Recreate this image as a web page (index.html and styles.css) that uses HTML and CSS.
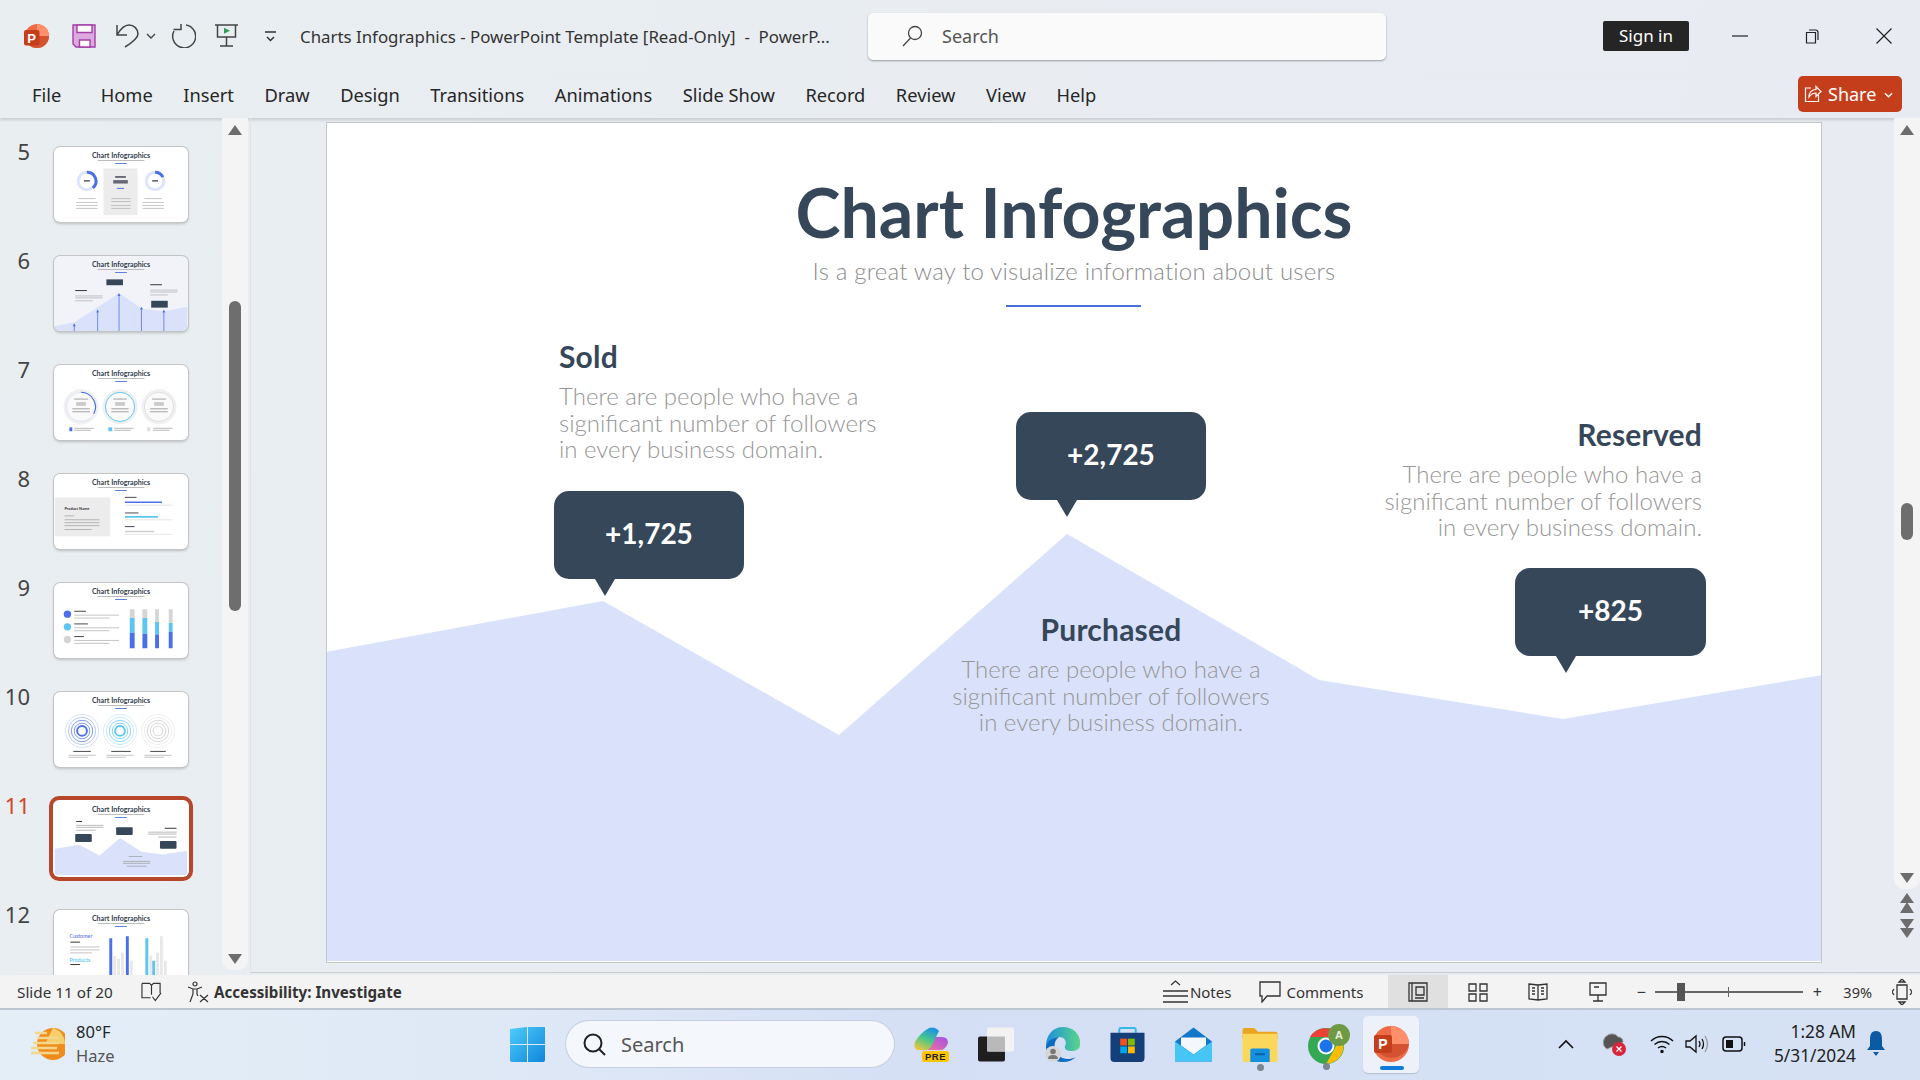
FILE: index.html
```html
<!DOCTYPE html>
<html lang="en">

<head>
    <meta charset="UTF-8">
    <title>Charts Infographics - PowerPoint</title>
    <link rel="stylesheet" href="styles.css">
</head>

<body>
    <header class="titlebar">
        <svg class="qat logo" viewBox="0 0 25 24">
            <circle cx="13" cy="12" r="12" fill="#ed6c47"/>
            <path d="M13 0a12 12 0 0 1 12 12H13z" fill="#ff8f6b"/>
            <path d="M1 12a12 12 0 0 0 24 0z" fill="#d35230"/>
            <rect x="0" y="6" width="15.500" height="15.500" rx="2" fill="#c43e1c"/>
            <text x="7.700" y="18.500" class="logo-p">P</text>
        </svg>
        <svg class="qat save" viewBox="0 0 24 24" fill="none" stroke="#a43fa8" stroke-width="1.400">
            <path d="M1 1h22v22H4l-3-3z" fill="#dcaade"/>
            <path d="M5 1h15v7.500H5zM7.500 16h10.500v7H7.500z" fill="#fff"/>
        </svg>
        <svg class="qat undo" viewBox="0 0 25 24" fill="none" stroke="#444" stroke-width="1.500">
            <path d="M2 1V11H12M2 11C6 4 10 1 14 1 19 1 23 5 23 10 23 14 18 18 10 23"/>
        </svg>
        <svg class="qat chev" viewBox="0 0 10 6" fill="none" stroke="#444" stroke-width="1.400">
            <path d="M1 1l4 4 4-4"/>
        </svg>
        <svg class="qat redo" viewBox="0 0 25 24" fill="none" stroke="#444" stroke-width="1.500">
            <path d="M15 1A11.500 11.500 0 1 1 3 7M10 0V5.500H2.500"/>
        </svg>
        <svg class="qat present" viewBox="0 0 23 24" fill="none" stroke="#444" stroke-width="1.500">
            <path d="M0 1h23M2.500 1v12h18V1M11.500 13v9M5 22h13"/>
            <path d="M9 3.700l6 3-6 3z" fill="#2e9e5b" stroke="none"/>
        </svg>
        <svg class="qat custom" viewBox="0 0 13 14" fill="none" stroke="#333" stroke-width="1.500">
            <path d="M1 3h11M3 8l3.500 3.500L10 8"/>
        </svg>
        <div class="doc-title">Charts Infographics - PowerPoint Template [Read-Only]&nbsp; -&nbsp; PowerP...</div>
        <div class="search-box">
            <svg class="search-glass" viewBox="0 0 22 22" fill="none" stroke="#444" stroke-width="1.300">
                <circle cx="14" cy="8" r="6.500"/>
                <path d="M9.500 13L2 21"/>
            </svg>
            <span>Search</span>
        </div>
        <div class="sign-in">Sign in</div>
        <div class="win-buttons">
            <svg viewBox="0 0 16 16" fill="none" stroke="#222" stroke-width="1.200"><path d="M0 8h16"/></svg>
            <svg viewBox="0 0 16 16" fill="none" stroke="#222" stroke-width="1.200"><path d="M2.500 4.500h9v10.500h-9zM5 2h6.500q2.500 0 2.500 2.500V12"/></svg>
            <svg viewBox="0 0 16 16" fill="none" stroke="#222" stroke-width="1.200"><path d="M0.500 0.500l15 15M15.500 0.500l-15 15"/></svg>
        </div>
    </header>

    <nav class="ribbon">
        <div class="tabs">
            <a class="tab-file">File</a>
            <a>Home</a>
            <a>Insert</a>
            <a>Draw</a>
            <a>Design</a>
            <a>Transitions</a>
            <a>Animations</a>
            <a>Slide Show</a>
            <a>Record</a>
            <a>Review</a>
            <a>View</a>
            <a>Help</a>
        </div>
        <div class="share">
            <svg viewBox="0 0 18 18" fill="none" stroke="#fff" stroke-width="1.200">
                <path d="M7 3H1.500v13.500h13V10M5 12c0-5 3-7.500 7-7.500V1.500l5 5-5 5V8c-3 0-5 1-7 4z"/>
            </svg>
            <span>Share</span>
            <svg class="share-chev" viewBox="0 0 10 6" fill="none" stroke="#fff" stroke-width="1.500"><path d="M1 1l4 4 4-4"/></svg>
        </div>
    </nav>

    <main class="workspace">
        <aside class="panel">
            <svg width="0" height="0" class="defs">
                <defs>
                    <g id="thumbHead">
                        <text x="68" y="11" class="th-title">Chart Infographics</text>
                        <rect x="44" y="13.500" width="48" height="0.800" fill="#aaa"/>
                        <rect x="62" y="16.500" width="12" height="0.900" fill="#4a6fe0"/>
                    </g>
                </defs>
            </svg>
            <div class="thumbs">
                <div class="thumb-row">
                    <span class="num">5</span>
                    <svg class="thumb" viewBox="0 0 136 77">
                        <use href="#thumbHead"/>
                        <rect x="50" y="22" width="35" height="48" fill="#ececec"/>
                        <circle cx="33" cy="35" r="9" fill="none" stroke="#dde4fb" stroke-width="3"/>
                        <path d="M33 26a9 9 0 0 1 6 16" fill="none" stroke="#4a6fe8" stroke-width="3"/>
                        <circle cx="103" cy="35" r="9" fill="none" stroke="#dde4fb" stroke-width="3"/>
                        <path d="M103 26a9 9 0 0 1 8 5" fill="none" stroke="#4a6fe8" stroke-width="3"/>
                        <rect x="30" y="34" width="6" height="1.500" fill="#556"/>
                        <rect x="100" y="34" width="6" height="1.500" fill="#556"/>
                        <rect x="62" y="30" width="11" height="1.500" fill="#445"/>
                        <rect x="60" y="34" width="15" height="3.500" fill="#667"/>
                        <rect x="64" y="42" width="7" height="1" fill="#4a6fe8"/>
                        <path d="M24 53h18M22 57h22M22 60h22M22 63h22M92 53h18M90 57h22M90 60h22M90 63h22M58 53h20M58 56h20M58 60h20M58 63h20" stroke="#aaa" stroke-width="0.700"/>
                    </svg>
                </div>
                <div class="thumb-row">
                    <span class="num">6</span>
                    <svg class="thumb thumb-tint" viewBox="0 0 136 77">
                        <use href="#thumbHead"/>
                        <path d="M0 72L20 68 44 53 66 38 89 54 112 57 136 52V77H0z" fill="#d9e1fb"/>
                        <path d="M20 77V71M44 77V58M66 77V41M89 77V55M112 77V58" stroke="#6d89ee" stroke-width="1"/>
                        <path d="M20 69l-1.500 3h3zM44 55l-1.500 3h3zM66 38l-1.500 3h3zM89 52l-1.500 3h3zM112 55l-1.500 3h3z" fill="#4a6fe8"/>
                        <rect x="53" y="24" width="17" height="6" fill="#364759"/>
                        <rect x="99" y="46" width="17" height="7" fill="#364759"/>
                        <rect x="21" y="35" width="12" height="1" fill="#333"/>
                        <rect x="98" y="29" width="12" height="1" fill="#333"/>
                        <path d="M21 41h28M21 43h28M21 46h18M98 35h28M98 37h28M98 40h18" stroke="#aaa" stroke-width="0.700"/>
                    </svg>
                </div>
                <div class="thumb-row">
                    <span class="num">7</span>
                    <svg class="thumb" viewBox="0 0 136 77">
                        <use href="#thumbHead"/>
                        <circle cx="27" cy="43" r="18" fill="#f0f0f0"/>
                        <circle cx="67" cy="43" r="18" fill="#f0f0f0"/>
                        <circle cx="107" cy="43" r="18" fill="#f0f0f0"/>
                        <circle cx="27" cy="43" r="15" fill="#fafafa" stroke="#dde4fb"/>
                        <circle cx="67" cy="43" r="15" fill="#fafafa" stroke="#5cc6f0"/>
                        <circle cx="107" cy="43" r="15" fill="#fafafa" stroke="#ddd"/>
                        <path d="M27 28a15 15 0 0 1 13 22" fill="none" stroke="#4a6fe8" stroke-width="1.200"/>
                        <path d="M20 35h14M22 39h10M22 41h10M18 45h18M18 48h18M60 35h14M62 39h10M62 41h10M58 45h18M58 48h18M100 35h14M102 39h10M102 41h10M98 45h18M98 48h18" stroke="#777" stroke-width="0.700"/>
                        <rect x="15" y="64" width="3" height="4" fill="#4a6fe8"/>
                        <rect x="55" y="64" width="4" height="4" fill="#5cc6f0"/>
                        <rect x="95" y="64" width="3" height="4" fill="#ddd"/>
                        <path d="M20 65h20M20 67h17M61 65h20M61 67h17M101 65h20M101 67h17" stroke="#999" stroke-width="0.700"/>
                    </svg>
                </div>
                <div class="thumb-row">
                    <span class="num">8</span>
                    <svg class="thumb" viewBox="0 0 136 77">
                        <use href="#thumbHead"/>
                        <rect x="0" y="24" width="57" height="40" fill="#ececec"/>
                        <text x="10" y="37" class="th-small">Product Name</text>
                        <path d="M10 43h10M10 47h36M10 50h36M10 53h36M10 57h28" stroke="#999" stroke-width="0.700"/>
                        <path d="M72 24h12M72 40h14M72 54h10" stroke="#445" stroke-width="1"/>
                        <path d="M72 29h38" stroke="#4a6fe8" stroke-width="1.600"/>
                        <path d="M72 44h34" stroke="#5cc6f0" stroke-width="1.600"/>
                        <path d="M72 59h30" stroke="#ccc" stroke-width="1.600"/>
                        <path d="M72 32h48M72 47h48M72 62h48" stroke="#ccc" stroke-width="0.500"/>
                    </svg>
                </div>
                <div class="thumb-row">
                    <span class="num">9</span>
                    <svg class="thumb" viewBox="0 0 136 77">
                        <use href="#thumbHead"/>
                        <circle cx="13" cy="32" r="3.800" fill="#4a6fe8"/>
                        <circle cx="13" cy="45" r="3.800" fill="#5cc6f0"/>
                        <circle cx="13" cy="58" r="3.800" fill="#d5d5d5"/>
                        <path d="M20 29h12M20 42h14M20 55h10" stroke="#444" stroke-width="1"/>
                        <path d="M20 33h46M20 36h36M20 46h46M20 49h36M20 59h46M20 62h36" stroke="#aaa" stroke-width="0.700"/>
                        <path d="M77 27h5v9h-5zM90 27h5v9h-5zM103 27h4v13h-4zM117 27h4v14h-4z" fill="#d5d5d5"/>
                        <path d="M77 36h5v15h-5zM90 36h5v16h-5zM103 40h4v13h-4zM117 41h4v9h-4z" fill="#5cc6f0"/>
                        <path d="M77 51h5v16h-5zM90 52h5v15h-5zM103 53h4v14h-4zM117 50h4v17h-4z" fill="#4a6fe8"/>
                    </svg>
                </div>
                <div class="thumb-row">
                    <span class="num">10</span>
                    <svg class="thumb" viewBox="0 0 136 77">
                        <use href="#thumbHead"/>
                        <g fill="none" stroke="#7c96ee">
                            <circle cx="28" cy="40" r="17" stroke="#d5defa"/>
                            <circle cx="28" cy="40" r="14" stroke="#b5c4f6"/>
                            <circle cx="28" cy="40" r="11"/>
                            <circle cx="28" cy="40" r="8"/>
                            <circle cx="28" cy="40" r="5" stroke="#4a6fe8" stroke-width="2"/>
                        </g>
                        <g fill="none" stroke="#82d4f5">
                            <circle cx="67" cy="40" r="17" stroke="#d6f0fb"/>
                            <circle cx="67" cy="40" r="14" stroke="#bde8f9"/>
                            <circle cx="67" cy="40" r="11"/>
                            <circle cx="67" cy="40" r="8"/>
                            <circle cx="67" cy="40" r="5" stroke="#5cc6f0" stroke-width="2"/>
                        </g>
                        <g fill="none" stroke="#d5d5d5">
                            <circle cx="106" cy="40" r="17" stroke="#f0f0f0"/>
                            <circle cx="106" cy="40" r="14" stroke="#ececec"/>
                            <circle cx="106" cy="40" r="11"/>
                            <circle cx="106" cy="40" r="8"/>
                            <circle cx="106" cy="40" r="5"/>
                        </g>
                        <path d="M19 61h18M58 61h20M98 61h16" stroke="#444" stroke-width="1"/>
                        <path d="M14 65h28M14 67h20M53 65h28M53 67h20M92 65h28M92 67h20" stroke="#aaa" stroke-width="0.700"/>
                    </svg>
                </div>
                <div class="thumb-row active">
                    <span class="num">11</span>
                    <svg class="thumb" viewBox="0 0 136 77">
                        <use href="#thumbHead"/>
                        <path d="M0 49L25 45 46 56 67 38 89 52 111 55 136 51V76H0z" fill="#d9e1fb"/>
                        <rect x="21" y="34" width="17" height="8" rx="1" fill="#364759"/>
                        <rect x="63" y="27" width="17" height="8" rx="1" fill="#364759"/>
                        <rect x="108" y="41" width="17" height="8" rx="1" fill="#364759"/>
                        <path d="M22 21h6M113 28h12" stroke="#333" stroke-width="1"/>
                        <path d="M22 25h28M22 27h28M22 30h20M96 32h29M96 34h29M106 37h19M76 57h14M70 62h28M70 64h28M74 67h20" stroke="#999" stroke-width="0.700"/>
                    </svg>
                </div>
                <div class="thumb-row">
                    <span class="num">12</span>
                    <svg class="thumb" viewBox="0 0 136 77">
                        <use href="#thumbHead"/>
                        <text x="15" y="29" class="th-blue">Customer</text>
                        <text x="15" y="53" class="th-cyan">Products</text>
                        <path d="M16 33h10M16 56h10" stroke="#333" stroke-width="1"/>
                        <path d="M16 38h30M16 41h30M16 44h22" stroke="#aaa" stroke-width="0.700"/>
                        <path d="M56 29h3v40h-3zM73 27h3v42h-3z" fill="#4a6fe8"/>
                        <path d="M60 47h3v22h-3zM64 50h3v19h-3zM68 44h3v25h-3zM77 52h3v17h-3z" fill="#e8e8e8"/>
                        <path d="M93 29h3v40h-3zM100 52h3v17h-3z" fill="#5cc6f0"/>
                        <path d="M97 47h3v22h-3zM104 44h3v25h-3zM108 27h3v42h-3zM112 52h3v17h-3z" fill="#e8e8e8"/>
                    </svg>
                </div>
            </div>
            <div class="scroll-track left-track">
                <i class="arrow up"></i>
                <i class="scroll-thumb thumb-long"></i>
                <i class="arrow down"></i>
            </div>
        </aside>

        <section class="stage">
            <div class="slide">
                <h1>Chart Infographics</h1>
                <p class="subtitle">Is a great way to visualize information about users</p>
                <div class="rule"></div>

                <svg class="wave" viewBox="1 1 1494 838">
                    <path d="M0 530L277 479 513 613 741 412 993 558 1237 597 1496 553V841H0z" fill="#dae2fb"/>
                </svg>

                <div class="block sold">
                    <h2>Sold</h2>
                    <p>There are people who have a<br>significant number of followers<br>in every business domain.</p>
                </div>
                <div class="block reserved">
                    <h2>Reserved</h2>
                    <p>There are people who have a<br>significant number of followers<br>in every business domain.</p>
                </div>
                <div class="block purchased">
                    <h2>Purchased</h2>
                    <p>There are people who have a<br>significant number of followers<br>in every business domain.</p>
                </div>

                <div class="bubble b1">+1,725</div>
                <div class="bubble b2">+2,725</div>
                <div class="bubble b3">+825</div>
            </div>
        </section>

        <div class="scroll-track right-track">
            <i class="arrow up"></i>
            <i class="scroll-thumb thumb-short"></i>
            <i class="arrow down"></i>
        </div>
        <svg class="page-arrows" viewBox="0 0 16 46" fill="#6d6d6d">
            <path d="M8 0l7 10H1zM8 9l7 11H1zM1 26h14l-7 10zM1 35h14l-7 10z"/>
        </svg>
    </main>

    <footer class="status">
        <span class="slide-count">Slide 11 of 20</span>
        <svg class="st-book" viewBox="0 0 22 20" fill="none" stroke="#333" stroke-width="1.200">
            <path d="M1 1h8l2 2 2-2h7v10M1 1v15h9M11 3v10M12 15l3 4 6-8"/>
        </svg>
        <svg class="st-access" viewBox="0 0 22 22" fill="none" stroke="#333" stroke-width="1.200">
            <circle cx="8" cy="3" r="2"/>
            <path d="M1 6l5 2h4l5-2M6 8v5l-3 8M10 8v5l1 2M13 14l8 7M21 14l-8 7"/>
        </svg>
        <span class="access-text">Accessibility: Investigate</span>

        <div class="status-right">
            <svg class="st-notes" viewBox="0 0 25 23" fill="none" stroke="#333" stroke-width="1.300">
                <path d="M8 5l4.500-4L17 5M0 11h25M0 16h25M0 22h25"/>
            </svg>
            <span>Notes</span>
            <svg class="st-comments" viewBox="0 0 22 22" fill="none" stroke="#333" stroke-width="1.300">
                <path d="M1 1h20v14H8l-5 6v-6H1z"/>
            </svg>
            <span>Comments</span>
            <div class="views">
                <div class="view on">
                    <svg viewBox="0 0 20 20" fill="none" stroke="#333" stroke-width="1.300"><path d="M1 1h18v18H1zM4 1v18M8 5h8v8H8zM7 16h9"/></svg>
                </div>
                <div class="view">
                    <svg viewBox="0 0 20 20" fill="none" stroke="#333" stroke-width="1.300"><path d="M1 2h7v7H1zM12 2h7v7h-7zM1 12h7v7H1zM12 12h7v7h-7z"/></svg>
                </div>
                <div class="view">
                    <svg viewBox="0 0 20 20" fill="none" stroke="#333" stroke-width="1.300"><path d="M1 2l9 1 9-1v15l-9 1-9-1zM10 3v15M4 6h3M4 9h3M4 12h3M13 6h3M13 9h3M13 12h3"/></svg>
                </div>
                <div class="view">
                    <svg viewBox="0 0 20 20" fill="none" stroke="#333" stroke-width="1.300"><path d="M2 1h16v12H2zM10 13v6M5 19h10M6 5h5"/></svg>
                </div>
            </div>
            <div class="zoom-bar">
                <i class="zoom-sign">&minus;</i>
                <div class="slider"><i class="slider-mid"></i><i class="slider-knob"></i></div>
                <i class="zoom-sign">+</i>
            </div>
            <span class="zoom-pct">39%</span>
            <svg class="st-fit" viewBox="0 0 20 26" fill="none" stroke="#333" stroke-width="1.300">
                <path d="M5 6h10v14H5zM10 0l3 3H7zM10 26l3-3H7zM2 10l-2 3 2 3M18 10l2 3-2 3"/>
            </svg>
        </div>
    </footer>

    <div class="taskbar">
        <div class="weather">
            <svg viewBox="0 0 36 34">
                <circle cx="24" cy="17" r="16" fill="#f08c1e"/>
                <path d="M24 1a16 16 0 0 1 12 16H16z" fill="#f6ce6a"/>
                <path d="M6 6h12M8 11h22M4 16h26M2 21h26M2 26h28" stroke="#f3d78c" stroke-width="2.500"/>
            </svg>
            <div class="weather-text">
                <span>80°F</span>
                <span class="haze">Haze</span>
            </div>
        </div>

        <div class="apps">
            <svg class="win" viewBox="0 0 35 35">
                <defs>
                    <linearGradient id="winA" x1="0" y1="0" x2="1" y2="1"><stop offset="0" stop-color="#4fcdf9"/><stop offset="1" stop-color="#0f86dc"/></linearGradient>
                </defs>
                <path d="M0 2l17-2v17H0zM18 0h17v17H18zM0 18h17v17H2q-2 0-2-2zM18 18h17v15q0 2-2 2H18z" fill="url(#winA)"/>
            </svg>
            <div class="task-search">
                <svg viewBox="0 0 24 24" fill="none" stroke="#222" stroke-width="2"><circle cx="11" cy="11" r="8.500"/><path d="M17 17l6 6"/></svg>
                <span>Search</span>
            </div>
            <svg class="app-ic copilot" viewBox="0 0 35 35">
                <defs>
                    <linearGradient id="copA" x1="0.700" y1="0" x2="0.200" y2="1"><stop offset="0" stop-color="#1f8fe6"/><stop offset="0.500" stop-color="#47c98a"/><stop offset="1" stop-color="#f2c53a"/></linearGradient>
                    <linearGradient id="copB" x1="0" y1="1" x2="1" y2="0"><stop offset="0" stop-color="#f4719c"/><stop offset="1" stop-color="#9c52e6"/></linearGradient>
                    <linearGradient id="edgeA" x1="0" y1="0" x2="1" y2="0"><stop offset="0" stop-color="#1b8fdc"/><stop offset="1" stop-color="#5ad58a"/></linearGradient>
                </defs>
                <path d="M17 10h11q6 0 6 6-3 8-9 7H13z" fill="url(#copB)"/>
                <path d="M15 1q6-2 10 3l-8 16q-3 4-9 3H3q-4-2-2-8Q6 6 15 1z" fill="url(#copA)"/>
                <rect x="8" y="24" width="27" height="11" rx="2.500" fill="#ffc400"/>
                <text x="21.500" y="33" class="pre">PRE</text>
            </svg>
            <svg class="app-ic box" viewBox="0 0 37 34">
                <rect x="0" y="9" width="27" height="25" rx="2" fill="#1f1f1f"/>
                <rect x="9" y="0" width="27" height="24" rx="2" fill="#f2f2f2"/>
                <rect x="9" y="9" width="18" height="15" fill="#b9b9b9"/>
            </svg>
            <svg class="app-ic edge" viewBox="0 0 35 35">
                <path d="M18 0C30 0 36 9 35 18 35 22 31 24 26 24 22 24 19 22 20 19 22 15 20 10 14 10 8 10 2 15 1 19 1 8 8 0 18 0z" fill="url(#edgeA)"/>
                <path d="M1 19C2 14 8 10 14 10 10 13 9 17 10 22 12 30 20 35 31 30 28 33 23 35 18 35 8 35 0 28 1 19z" fill="#0c6cc0"/>
                <circle cx="8" cy="27" r="8" fill="#d6d6d6"/>
                <circle cx="8" cy="24.500" r="2.800" fill="#777"/>
                <path d="M3 32q0-4 5-4t5 4z" fill="#777"/>
            </svg>
            <svg class="app-ic store" viewBox="0 0 35 36">
                <path d="M9 6V3q0-2 2-2h13q2 0 2 2v3" fill="none" stroke="#35b8e8" stroke-width="2"/>
                <path d="M0 6h35v26q0 4-4 4H4q-4 0-4-4z" fill="#143f78"/>
                <rect x="10" y="12" width="7" height="7" fill="#f25022"/>
                <rect x="18" y="12" width="7" height="7" fill="#7fba00"/>
                <rect x="10" y="20" width="7" height="7" fill="#00a4ef"/>
                <rect x="18" y="20" width="7" height="7" fill="#ffb900"/>
            </svg>
            <svg class="app-ic mail" viewBox="0 0 37 34">
                <path d="M18.500 0L37 14v20H0V14z" fill="#1177c9"/>
                <path d="M6 10h25v8l-12.500 9L6 18z" fill="#f4f7fb"/>
                <path d="M0 14l18.500 13L37 14v20H0z" fill="#45c6f5"/>
            </svg>
            <div class="pinned">
                <svg class="app-ic folder" viewBox="0 0 36 36">
                    <path d="M0 3q0-2 2-2h10l4 4h18q2 0 2 2v5H0z" fill="#e9a520"/>
                    <path d="M0 7h36v27q0 2-2 2H2q-2 0-2-2z" fill="#fbd75b"/>
                    <path d="M10 22h16q2 0 2 2v12H8V24q0-2 2-2z" fill="#1490df"/>
                    <rect x="13" y="27" width="10" height="2" fill="#0b5ea8"/>
                </svg>
                <i class="dot"></i>
            </div>
            <div class="pinned">
                <svg class="app-ic chrome" viewBox="0 0 43 40">
                    <circle cx="18" cy="22" r="18" fill="#34a853"/>
                    <path d="M2 13a18 18 0 0 1 31 0H18z" fill="#ea4335"/>
                    <path d="M33 13a18 18 0 0 1-15 27l8-14z" fill="#fbbc05"/>
                    <circle cx="18" cy="22" r="8.500" fill="#fff"/>
                    <circle cx="18" cy="22" r="6.500" fill="#1a73e8"/>
                    <circle cx="31" cy="11" r="11" fill="#6f9a45"/>
                    <text x="31" y="15" class="avatar">A</text>
                </svg>
                <i class="dot"></i>
            </div>
            <div class="active-app">
                <svg viewBox="0 0 35 36">
                    <circle cx="17" cy="18" r="18" fill="#ed6c47"/>
                    <path d="M17 0a18 18 0 0 1 18 18H17z" fill="#ff8f6b"/>
                    <path d="M0 18a18 18 0 0 0 35 0z" fill="#d35230"/>
                    <rect x="0" y="9" width="18" height="18" rx="2" fill="#c43e1c"/>
                    <text x="9" y="23" class="logo-p big">P</text>
                </svg>
                <i class="run-bar"></i>
            </div>
        </div>

        <div class="tray">
            <svg class="tr-chev" viewBox="0 0 16 10" fill="none" stroke="#111" stroke-width="1.600"><path d="M1 9l7-7 7 7"/></svg>
            <svg class="tr-cloud" viewBox="0 0 25 26">
                <path d="M5 18a8 8 0 0 1 1-14c4-2 8-1 10 2 3 0 5 2 5 5z" fill="#555" stroke="#999"/>
                <circle cx="17" cy="18" r="7" fill="#d7263d"/>
                <path d="M14.500 15.500l5 5M19.500 15.500l-5 5" stroke="#fff" stroke-width="1.300"/>
            </svg>
            <svg class="tr-wifi" viewBox="0 0 24 20" fill="none" stroke="#111" stroke-width="1.500">
                <path d="M1 7c6-6 16-6 22 0M4.500 10.500c4.500-4 10.500-4 15 0M8 14c2.500-2 5.500-2 8 0"/>
                <circle cx="12" cy="17.500" r="1" fill="#111"/>
            </svg>
            <svg class="tr-sound" viewBox="0 0 24 20" fill="none" stroke="#111" stroke-width="1.300">
                <path d="M1 7h4l6-5v16l-6-5H1zM14 7q2 3 0 6M17 5q3 5 0 10"/>
                <path d="M20 2q5 8 0 16" stroke="#999"/>
            </svg>
            <svg class="tr-batt" viewBox="0 0 24 16" fill="none" stroke="#111" stroke-width="1.500">
                <rect x="1" y="1" width="19" height="14" rx="3"/>
                <rect x="4" y="4" width="7" height="8" fill="#111" stroke="none"/>
                <path d="M22.500 6v4"/>
            </svg>
            <div class="clock">
                <span>1:28 AM</span>
                <span>5/31/2024</span>
            </div>
            <svg class="tr-bell" viewBox="0 0 20 26" fill="#0c59a4">
                <path d="M10 0c-5 0-6 4-6 9v6l-3 4h18l-3-4V9c0-5-1-9-6-9zM7 21h6l-3 4z"/>
            </svg>
        </div>
    </div>
</body>

</html>
```

FILE: styles.css
```css
* {
    box-sizing: border-box;
}

html,
body {
    margin: 0;
    height: 1080px;
    overflow: hidden;
}

body {
    font-family: "Noto Sans", "Open Sans", sans-serif;
    color: #262626;
    background: linear-gradient(100deg, #e9eef1, #e8ebf2);
}

svg {
    display: block;
    flex: none;
}

.titlebar {
    display: flex;
    align-items: center;
    height: 75px;
    padding: 0 27px 3px 24px;
}

.qat {
    height: 24px;
}

.logo {
    width: 25px;
}

.logo-p {
    font: 700 13px "Liberation Sans", sans-serif;
    fill: #fff;
    text-anchor: middle;
}

.logo-p.big {
    font-size: 14px;
}

.save {
    width: 24px;
    margin-left: 23px;
}

.undo {
    width: 25px;
    margin-left: 19px;
}

.chev {
    width: 10px;
    height: 6px;
    margin-left: 6px;
}

.redo {
    width: 25px;
    margin-left: 15px;
}

.present {
    width: 23px;
    margin-left: 19px;
}

.custom {
    width: 13px;
    height: 14px;
    margin-left: 26px;
}

.doc-title {
    flex: none;
    width: 568px;
    margin-left: 23px;
    font-size: 16.850px;
    white-space: nowrap;
    color: #333;
}

.search-box {
    display: flex;
    flex: none;
    align-items: center;
    width: 518px;
    height: 47px;
    padding-left: 33px;
    background: #fafafa;
    border-radius: 5px;
    box-shadow: 0 1px 2px rgba(0, 0, 0, 0.35);
    font-size: 18px;
    color: #555;
}

.search-glass {
    width: 22px;
    height: 22px;
    margin-right: 19px;
}

.sign-in {
    flex: none;
    width: 86px;
    height: 30px;
    margin-left: 217px;
    background: #252525;
    border-radius: 2px;
    color: #fff;
    font-size: 17px;
    line-height: 30px;
    text-align: center;
}

.win-buttons {
    display: flex;
    gap: 56px;
    margin-left: 43px;
}

.win-buttons svg {
    width: 16px;
    height: 16px;
}

.ribbon {
    display: flex;
    align-items: center;
    justify-content: space-between;
    height: 43px;
    padding: 0 18px 6px 32px;
    box-shadow: 0 2px 3px rgba(0, 0, 0, 0.14);
    position: relative;
}

.tabs {
    display: flex;
    gap: 30.500px;
    margin-top: 2px;
    font-size: 18.300px;
    color: #262626;
}

.tabs .tab-file {
    margin-right: 9px;
}

.share {
    display: flex;
    align-items: center;
    width: 104px;
    height: 36px;
    padding-left: 6px;
    background: #c43e1c;
    border-radius: 5px;
    color: #fff;
    font-size: 18px;
}

.share svg {
    width: 18px;
    height: 18px;
    margin-right: 6px;
}

.share .share-chev {
    width: 9px;
    height: 6px;
    margin: 2px 0 0 8px;
}

.workspace {
    display: flex;
    height: 857px;
    position: relative;
}

.workspace::after {
    content: "";
    position: absolute;
    left: 251px;
    right: 0;
    top: 854px;
    height: 1px;
    background: #c8ccd1;
}

.panel {
    display: flex;
    flex: none;
    width: 251px;
    height: 857px;
    overflow: hidden;
    border-right: 1px solid #dfe3e7;
}

.defs {
    position: absolute;
}

.thumbs {
    display: flex;
    flex-direction: column;
    gap: 32px;
    width: 222px;
    padding: 28px 0 0 0;
}

.thumb-row {
    display: flex;
    align-items: flex-start;
    gap: 23px;
    height: 77px;
    flex: none;
}

.num {
    width: 30px;
    font-size: 22px;
    line-height: 22px;
    margin-top: -6px;
    text-align: right;
    color: #444;
}

.thumb {
    width: 134px;
    height: 75px;
    margin: 1px;
    background: #fff;
    border-radius: 6px;
    box-shadow: 0 0 0 1px #c4c4c4, 0 2px 3px rgba(0, 0, 0, 0.2);
}

.thumb-tint {
    background: #f1f3f9;
}

.active .num {
    color: #d24726;
}

.active .thumb {
    box-shadow: 0 0 0 1px #fff, 0 0 0 5px #b7472a;
    border-radius: 5px;
}

.th-title {
    font: 700 7.300px "Lato", sans-serif;
    fill: #2f3d4c;
    text-anchor: middle;
}

.th-small {
    font: 700 4px "Lato", sans-serif;
    fill: #333;
}

.th-blue,
.th-cyan {
    font: 500 5.500px "Lato", sans-serif;
    fill: #5b74f0;
}

.th-cyan {
    fill: #4cc4ee;
}

.scroll-track {
    position: relative;
    flex: none;
    width: 26px;
    background: #f4f4f4;
    border-radius: 0 0 10px 10px;
}

.left-track {
    height: 852px;
}

.right-track {
    height: 771px;
    margin-left: 73px;
}

.arrow {
    position: absolute;
    left: 6px;
    width: 0;
    height: 0;
    border-left: 7px solid transparent;
    border-right: 7px solid transparent;
}

.arrow.up {
    top: 7px;
    border-bottom: 10px solid #6d6d6d;
}

.arrow.down {
    bottom: 6px;
    border-top: 10px solid #6d6d6d;
}

.scroll-thumb {
    position: absolute;
    left: 7px;
    width: 12px;
    background: #6e6e6e;
    border-radius: 6px;
}

.thumb-long {
    top: 183px;
    height: 310px;
}

.thumb-short {
    top: 385px;
    height: 37px;
}

.page-arrows {
    position: absolute;
    left: 1899px;
    top: 775px;
    width: 16px;
    height: 46px;
}

.stage {
    flex: none;
    padding: 5px 0 0 76px;
}

.slide {
    position: relative;
    width: 1494px;
    height: 839px;
    background: #fff;
    outline: 1px solid #c3c7cb;
    font-family: "Lato", sans-serif;
    overflow: hidden;
}

.slide h1 {
    position: absolute;
    left: 0;
    right: 0;
    top: 47px;
    margin: 0;
    font-size: 68px;
    font-weight: 700;
    line-height: 84px;
    text-align: center;
    color: #364759;
}

.subtitle {
    position: absolute;
    left: 0;
    right: 0;
    top: 133px;
    margin: 0;
    font-size: 24px;
    font-weight: 300;
    line-height: 30px;
    letter-spacing: 0.200px;
    text-align: center;
    color: #8d8d8d;
}

.rule {
    position: absolute;
    left: 679px;
    top: 182px;
    width: 135px;
    height: 2px;
    background: #4a6fd8;
}

.wave {
    position: absolute;
    left: 0;
    top: 0;
    width: 1494px;
    height: 838px;
}

.block {
    position: absolute;
    width: 420px;
}

.block h2 {
    margin: 0 0 9px;
    font-size: 30px;
    font-weight: 700;
    line-height: 36px;
    letter-spacing: 0.200px;
    color: #364759;
}

.block p {
    margin: 0;
    font-size: 24px;
    font-weight: 300;
    line-height: 26.500px;
    color: #969696;
}

.sold {
    left: 232px;
    top: 215px;
}

.reserved {
    left: 955px;
    top: 293px;
    text-align: right;
}

.purchased {
    left: 574px;
    top: 488px;
    text-align: center;
}

.bubble {
    position: absolute;
    width: 190px;
    height: 88px;
    background: #364759;
    border-radius: 15px;
    color: #fff;
    font-size: 28px;
    font-weight: 700;
    line-height: 85px;
    text-align: center;
}

.bubble::after {
    content: "";
    position: absolute;
    top: 100%;
    left: 41px;
    border-top: 17px solid #364759;
    border-left: 10px solid transparent;
    border-right: 10px solid transparent;
}

.b1 {
    left: 227px;
    top: 368px;
}

.b2 {
    left: 689px;
    top: 289px;
}

.b3 {
    left: 1188px;
    top: 445px;
    width: 191px;
}

.status {
    display: flex;
    align-items: center;
    height: 33px;
    padding-left: 17px;
    background: #f3f3f3;
    font-size: 15px;
    color: #333;
}

.slide-count {
    width: 124px;
    font-size: 15.300px;
}

.st-book {
    width: 21px;
    height: 20px;
}

.st-access {
    width: 22px;
    height: 22px;
    margin-left: 25px;
}

.access-text {
    margin-left: 5px;
    font-size: 15.150px;
    font-weight: 700;
}

.status-right {
    display: flex;
    align-items: center;
    height: 100%;
    margin-left: auto;
    padding-right: 8px;
}

.st-notes {
    width: 25px;
    height: 23px;
    margin-right: 2px;
}

.st-comments {
    width: 22px;
    height: 22px;
    margin: 0 5px 0 28px;
}

.views {
    display: flex;
    height: 100%;
    margin-left: 25px;
}

.view {
    display: flex;
    align-items: center;
    justify-content: center;
    width: 60px;
    height: 100%;
}

.view.on {
    background: #e0e0e0;
}

.view svg {
    width: 20px;
    height: 20px;
}

.zoom-bar {
    display: flex;
    align-items: center;
    gap: 8px;
    margin-left: 7px;
}

.zoom-sign {
    font-style: normal;
    font-size: 16px;
    width: 12px;
    text-align: center;
}

.slider {
    position: relative;
    width: 148px;
    height: 2px;
    background: #666;
}

.slider-knob {
    position: absolute;
    left: 22px;
    top: -8px;
    width: 8px;
    height: 18px;
    background: #555;
}

.slider-mid {
    position: absolute;
    left: 73px;
    top: -4px;
    width: 1px;
    height: 10px;
    background: #666;
}

.zoom-pct {
    margin-left: 20px;
    font-size: 14.500px;
}

.st-fit {
    width: 20px;
    height: 26px;
    margin-left: 20px;
}

.taskbar {
    display: flex;
    align-items: center;
    height: 72px;
    padding: 0 0 2px 29px;
    border-top: 2px solid #bcc5d2;
    background: linear-gradient(90deg, #e3eef7 0, #dfe9f6 25%, #d4dff5 50%, #d6e2f4 100%);
}

.weather {
    display: flex;
    align-items: center;
    gap: 11px;
    width: 481px;
}

.weather svg {
    width: 36px;
    height: 34px;
}

.weather-text {
    display: flex;
    flex-direction: column;
    gap: 2px;
    font-size: 16.500px;
    line-height: 22px;
}

.haze {
    color: #555;
}

.apps {
    display: flex;
    align-items: center;
}

.win {
    width: 35px;
    height: 35px;
}

.task-search {
    display: flex;
    align-items: center;
    width: 328px;
    height: 46px;
    margin-left: 21px;
    padding-left: 16px;
    background: #f4f7fc;
    border-radius: 23px;
    box-shadow: 0 0 0 1px #c5cfdf;
    font-size: 20px;
    color: #555;
}

.task-search svg {
    width: 24px;
    height: 24px;
    margin-right: 15px;
}

.app-ic {
    height: 35px;
}

.copilot {
    width: 35px;
    margin-left: 20px;
}

.box {
    width: 37px;
    margin-left: 29px;
}

.edge {
    width: 35px;
    margin-left: 30px;
}

.store {
    width: 35px;
    margin-left: 30px;
}

.mail {
    width: 37px;
    margin-left: 30px;
}

.pinned {
    position: relative;
}

.pinned .folder {
    width: 36px;
    margin-left: 30px;
}

.pinned .chrome {
    width: 43px;
    height: 40px;
    margin-left: 30px;
}

.dot {
    position: absolute;
    bottom: -9px;
    right: 14px;
    width: 7px;
    height: 7px;
    background: #7d8590;
    border-radius: 50%;
}

.pinned .chrome + .dot {
    right: 21px;
    bottom: -6px;
}

.pre {
    font: 700 9.500px "Liberation Sans", sans-serif;
    letter-spacing: 0.500px;
    fill: #222;
    text-anchor: middle;
}

.avatar {
    font: 700 11px "Liberation Sans", sans-serif;
    fill: #e8f0de;
    text-anchor: middle;
}

.active-app {
    position: relative;
    display: flex;
    justify-content: center;
    align-items: center;
    width: 56px;
    height: 57px;
    margin-left: 12px;
    background: #edf1f9;
    border-radius: 5px;
    box-shadow: 0 1px 1px rgba(0, 0, 0, 0.15);
}

.active-app svg {
    width: 35px;
    height: 36px;
}

.run-bar {
    position: absolute;
    left: 17px;
    bottom: 3px;
    width: 24px;
    height: 4px;
    background: #0f7bd8;
    border-radius: 2px;
}

.tray {
    display: flex;
    align-items: center;
    margin-left: 139px;
}

.tr-chev {
    width: 16px;
    height: 10px;
}

.tr-cloud {
    width: 25px;
    height: 26px;
    margin-left: 28px;
}

.tr-wifi {
    width: 24px;
    height: 20px;
    margin-left: 23px;
}

.tr-sound {
    width: 24px;
    height: 20px;
    margin-left: 11px;
}

.tr-batt {
    width: 24px;
    height: 16px;
    margin-left: 13px;
}

.clock {
    display: flex;
    flex-direction: column;
    align-items: flex-end;
    gap: 2px;
    width: 110px;
    font-size: 17.300px;
    line-height: 22px;
    color: #222;
}

.tr-bell {
    width: 20px;
    height: 26px;
    margin-left: 10px;
}
```
